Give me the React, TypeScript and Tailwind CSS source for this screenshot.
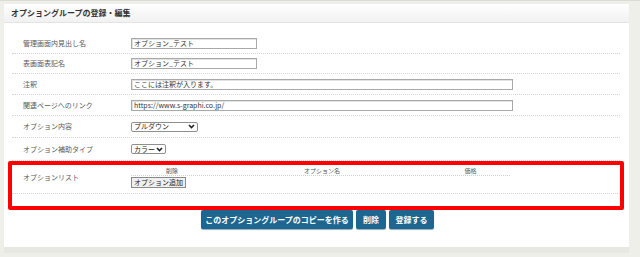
import React from "react";

const font = { fontFamily: '"Noto Sans CJK JP", "Noto Sans", sans-serif' };

function Chevron() {
  return (
    <svg width="7" height="5" viewBox="0 0 7 5" className="ml-auto mr-[2px] shrink-0">
      <path d="M1 1 L3.5 3.5 L6 1" stroke="#222" strokeWidth="1.6" fill="none" />
    </svg>
  );
}

function TextBox({ value, wide }: { value: string; wide?: boolean }) {
  return (
    <div
      className={`flex h-[11px] items-center border border-[#a9a9a9] bg-white pl-[2px] text-[7px] leading-none text-[#333] shadow-[inset_1px_1px_0_#e2e2e2] ${
        wide ? "w-[382px]" : "w-[126px]"
      }`}
    >
      {value}
    </div>
  );
}

function SelectBox({ value, width }: { value: string; width: string }) {
  return (
    <div
      className={`flex h-[10px] items-center rounded-[2px] border border-[#8f8f8f] bg-white pl-[2px] text-[7px] leading-none text-[#222] ${width}`}
    >
      <span className="shrink-0 whitespace-nowrap">{value}</span>
      <Chevron />
    </div>
  );
}

function Row({
  label,
  h,
  children,
}: {
  label: string;
  h: string;
  children: React.ReactNode;
}) {
  return (
    <div
      className={`flex items-center border-b border-dotted border-[#d4d4d4] ${h}`}
    >
      <div className="w-[119px] pl-[11px] text-[7px] leading-none text-[#5a5a5a]">
        {label}
      </div>
      {children}
    </div>
  );
}

export default function App() {
  return (
    <div
      className="h-[257px] w-[640px] overflow-hidden border-t-[1px] border-[#dcdcd6] bg-[#efefea] pl-[4px] pt-[3px]"
      style={font}
    >
      <div className="relative h-[243px] w-[625px] bg-white">
        <div className="flex h-[19px] items-center border-b border-[#e4e4e4] bg-gradient-to-b from-white to-[#f1f1f1] pl-[7px] text-[8px] font-bold leading-none text-[#333]">
          オプショングループの登録・編集
        </div>

        <div className="pl-[8px] pr-[9px] pt-[10px]">
          <Row label="管理画面内見出し名" h="h-[21px]">
            <TextBox value="オプション_テスト" />
          </Row>
          <Row label="表画面表記名" h="h-[20px]">
            <TextBox value="オプション_テスト" />
          </Row>
          <Row label="注釈" h="h-[21px]">
            <TextBox value="ここには注釈が入ります。" wide />
          </Row>
          <Row label="関連ページへのリンク" h="h-[21px]">
            <TextBox value="https://www.s-graphi.co.jp/" wide />
          </Row>
          <Row label="オプション内容" h="h-[22px]">
            <SelectBox value="プルダウン" width="w-[67px]" />
          </Row>
          <Row label="オプション補助タイプ" h="h-[23px]">
            <SelectBox value="カラー" width="w-[35px]" />
          </Row>
          <Row label="オプションリスト" h="h-[33px]">
            <div className="flex flex-col pt-[1px]">
              <div className="flex h-[9px] w-[379px] items-center border-b border-dotted border-[#cfcfcf] text-[6px] leading-none text-[#555]">
                <div className="w-[82px] text-center">削除</div>
                <div className="w-[218px] text-center">オプション名</div>
                <div className="w-[79px] text-center">価格</div>
              </div>
              <div className="mt-[1px] flex h-[11px] w-[55px] items-center justify-center border border-[#8a8a8a] bg-[#efefef] text-[7px] leading-none text-[#222]">
                オプション追加
              </div>
            </div>
          </Row>
        </div>

        <div className="mt-[16px] flex justify-center gap-[3px] pl-[2px]">
          <div className="flex h-[19px] w-[152px] items-center justify-center rounded-[2px] bg-[#1d6690] text-[8px] font-bold leading-none text-white shadow-[0_1px_1px_#9ab]">
            このオプショングループのコピーを作る
          </div>
          <div className="flex h-[19px] w-[30px] items-center justify-center rounded-[2px] bg-[#1d6690] text-[8px] font-bold leading-none text-white shadow-[0_1px_1px_#9ab]">
            削除
          </div>
          <div className="flex h-[19px] w-[45px] items-center justify-center rounded-[2px] bg-[#1d6690] text-[8px] font-bold leading-none text-white shadow-[0_1px_1px_#9ab]">
            登録する
          </div>
        </div>

        <div className="pointer-events-none absolute left-[4px] top-[157px] h-[49px] w-[616px] rounded-[2px] border-[4px] border-[#ff0000]" />
      </div>
      <div className="h-[6px] w-[625px] bg-[#e8e8e3]" />
    </div>
  );
}
